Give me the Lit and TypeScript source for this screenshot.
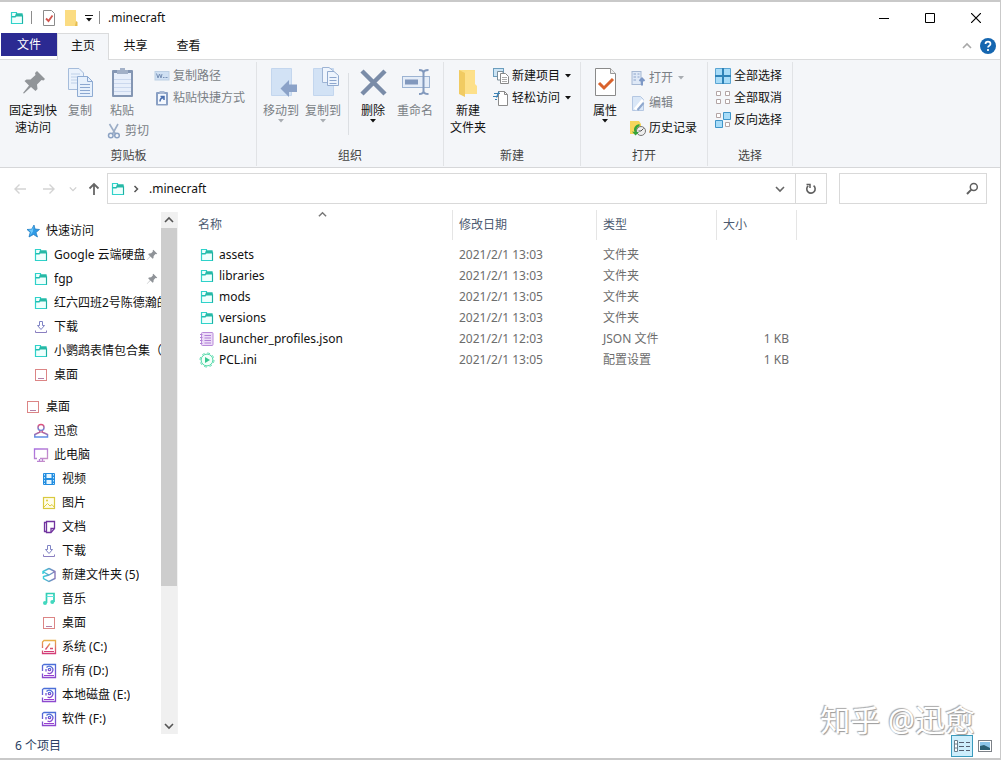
import { LitElement, html, svg, css, TemplateResult, SVGTemplateResult } from "lit";
import { customElement, state } from "lit/decorators.js";

type Art = SVGTemplateResult;

const icon = (size: number, art: Art, box = size): TemplateResult =>
  html`<svg width=${size} height=${size} viewBox="0 0 ${box} ${box}" fill="none" aria-hidden="true">${art}</svg>`;

const art: Record<string, Art> = {
  folder: svg`<path d="M2.5 13.5V2.5H7.5V5.5H13.5V13.5Z" stroke="#2fd2ca" stroke-width="1.200" fill="#effffd"/><path d="M7 3.5H13.5V6H7.5L6.5 7.5H2.5V6H6Z" fill="#22bfb2"/><path d="M7 3.500H13.500V6.500H7Z" fill="#27b9a6"/><path d="M13.5 6V13.5" stroke="#1fae9f"/>`,
  star: svg`<path d="M9 2L10 6L14.500 6.500L11 9.500L12.500 14L8.500 11.500L4 14L5.200 9.300L2 6.500L6.700 6.200Z" fill="#2f9be6" stroke="#1776bd" stroke-width=".7"/><path d="M8.500 3L7 6.500L3.500 6.800L6 9L5 12.500L8 8.500Z" fill="#6cc7fa"/>`,
  download: svg`<path d="M6.500 2.500H9.500V6.500H11.500L8 10.500L4.500 6.500H6.500Z" stroke="#7f83c4"/><path d="M2.500 11.500V13.500H13.500V11.500" stroke="#8a7fc0"/>`,
  desktop: svg`<rect x="2.500" y="2.500" width="11" height="11" stroke="#dc8585"/><path d="M5 11.500H11" stroke="#b57fa8"/>`,
  user: svg`<g stroke="url(#g-user)" stroke-width="1.500"><circle cx="8" cy="4.500" r="3"/><path d="M6.500 7.500L7 9L1.800 11.500V14H14.500V11.500L9 9L9.600 7.500"/></g>`,
  pc: svg`<g stroke="url(#g-pc)" stroke-width="1.300"><path d="M4 11.500H1.500V2H14.500V11.500H7"/><path d="M6.500 12V14M9.500 12V14M4 14.300H12"/></g>`,
  video: svg`<rect x="2" y="2" width="12" height="12" rx="1" fill="#238de0"/><path d="M5.500 3H10.500V7H5.500ZM5.500 9H10.500V13H5.500Z" fill="#e9f8ff"/><path d="M3.500 3V13M12.500 3V13" stroke="#bfe8ff" stroke-dasharray="1.500 1.500"/>`,
  picture: svg`<rect x="2.500" y="2.500" width="11" height="11" stroke="#d9c93f" stroke-width="1.200" fill="#fffdeb"/><path d="M3 12L6.500 8.500L9 11L11 9.500L13 12" stroke="#e0cf3f"/><circle cx="6" cy="5.500" r="1" fill="#ddca36"/>`,
  doc: svg`<path d="M5.500 12.500H3.500V3.500H5.500M5.500 2.500H13.500V9.500L10 13.500H5.500Z" stroke="#71349f" stroke-width="1.300"/><path d="M13.500 9.500H10V13" stroke="#71349f" stroke-width="1.300"/>`,
  cube: svg`<path d="M8 1.500L14 4.500V11.500L8 14.500L2.500 11.500V9M2 7V4.500L8 1.500M2.500 5L8 8L14 4.500M2.500 9.500L8 8" stroke="url(#g-cube)" stroke-width="1.400"/>`,
  music: svg`<path d="M5.500 12V2.500H13V11" stroke="#32cfb5" stroke-width="1.700"/><path d="M5.500 5.500H13" stroke="#5fe0e0"/><circle cx="4" cy="12" r="2" fill="#43d8bf"/><circle cx="11.300" cy="11" r="2" fill="#43d8bf"/>`,
  driveC: svg`<g stroke="url(#g-c)" stroke-width="1.300"><path d="M1.500 9V3L3 1.500H14.500V14.500H1.500V11.500"/><path d="M4.500 10.500L9 4.500M9 9.500H12"/></g><path d="M3 12.500H13" stroke="#d43c78"/>`,
  drive: svg`<g stroke="url(#g-d)" stroke-width="1.300"><path d="M1.500 8V2.500L3 1.500H14.500V14.500H1.500V10.500"/><path d="M5.500 4.500A3.600 3.600 0 1 1 6.500 10M5 6V8.500"/><circle cx="8.500" cy="6.500" r="1.200"/></g><path d="M3 12.500H13" stroke="#9b3fd0"/>`,
  json: svg`<rect x="2.500" y="1.500" width="11.500" height="13" rx="1" stroke="#b88ad9" fill="#ecdcf7"/><path d="M1 3.500H3.500M1 6.500H3.500M1 9.500H3.500M1 12.500H3.500M5.500 4.500H12M5.500 7H12M5.500 9.500H12M5.500 12H12" stroke="#b080d6"/>`,
  ini: svg`<circle cx="8" cy="8" r="7" stroke="#5bdcae" stroke-dasharray="2.800 2.700"/><circle cx="8" cy="8" r="5.900" fill="#f4fffa" stroke="#4fd7a6"/><path d="M6 5V11L11 8Z" fill="#35c78f"/>`,
  pin: svg`<path d="M9.500 2L14 6.500L12.800 7.200L11.900 6.900L9.900 9L9.700 11.500L8.700 12.300L6.200 9.800L2.500 13.500L2 14L2.400 13L5.800 9.300L3.600 7.200L4.500 6.300L7 6.100L9 4.100L8.700 3.100Z" fill="#8f9398"/>`,
  up: svg`<path d="M8 14V3M3.500 7.500L8 3L12.500 7.500" stroke="#666" stroke-width="1.800"/>`,
  back: svg`<path d="M14 8H3M7.500 3.500L3 8L7.500 12.500" stroke="#d3d3d3" stroke-width="1.400"/>`,
  forward: svg`<path d="M2 8H13M8.500 3.500L13 8L8.500 12.500" stroke="#d3d3d3" stroke-width="1.400"/>`,
  refresh: svg`<path d="M5.200 4.800A4.200 4.200 0 1 0 10.600 4.700" stroke="#5f5f5f" stroke-width="1.600"/><path d="M3.500 3.500H7V7" stroke="#5f5f5f" stroke-width="1.500"/>`,
  search: svg`<circle cx="9.800" cy="6" r="3.500" stroke="#606060" stroke-width="1.500"/><path d="M7.300 8.600L3 13" stroke="#606060" stroke-width="2"/>`,
  check: svg`<path d="M2.500 .5H10.500L13.500 3.500V15.500H2.500Z" fill="#fff" stroke="#8b8b8b"/><path d="M5 8.500L7.500 11L11.500 5.500" stroke="#d2564f" stroke-width="1.800"/>`,
  yellow: svg`<path d="M2 0H13V12H14V16H2Z" fill="#fbdc82"/><path d="M13 11L14.500 12V16H12Z" fill="#e6bd4e"/>`,
  copyPath: svg`<rect x="1" y="3.500" width="14" height="8.500" fill="#cfe0f3" stroke="#bccfe4"/><path d="M2.500 5.500L4 10L5.500 6L7 10L8 6M9 9.500H10.500M11.500 9.500H13.500" stroke="#7790b5"/>`,
  shortcut: svg`<rect x="2" y="2" width="12" height="13.500" rx="1" fill="#8aa0c4"/><rect x="4" y="4" width="8" height="10" fill="#f4f8fe"/><path d="M5.500 1H10.500V4H5.500Z" fill="#a9b9d3"/><path d="M6 11.500C6 9 7 8 9.500 7.500M6.500 6.500H10V10" stroke="#4b6fae" stroke-width="1.500"/>`,
  scissors: svg`<path d="M3.500 1L9.500 11M12 1L6.500 11" stroke="#9badc6" stroke-width="1.600"/><circle cx="4.800" cy="12.500" r="2.300" stroke="#8ba2c3" stroke-width="1.500"/><circle cx="11" cy="12.500" r="2.300" stroke="#8ba2c3" stroke-width="1.500"/>`,
  newItem: svg`<rect x=".5" y=".5" width="10" height="8" fill="#cbe4f5" stroke="#6b9dbd"/><path d="M4.500 3.500H10V12H4.500Z" fill="#fff" stroke="#7b8d99"/><path d="M7.500 5.500H12.500L15.500 8.500V15.500H7.500Z" fill="#fff" stroke="#888"/><path d="M9 9.500H14M9 11.500H14M9 13.500H14" stroke="#aaa"/>`,
  access: svg`<path d="M5.500 1.500H11.500L14.500 4.500V15.500H5.500Z" fill="#fff" stroke="#8b8b8b"/><path d="M11.500 1.500V4.500H14.500" stroke="#888"/><path d="M1 3.500H7M0 6.500H5M2 9.500H4M6 1.500L3.500 7.500" stroke="#3c82b4" stroke-width="1.200"/>`,
  open: svg`<rect x="2" y="1.500" width="9" height="13" fill="#dfe9f7" stroke="#a6b8d3"/><path d="M3.500 4H6M3.500 7H6M3.500 10H6M7.500 4H9.500M7.500 7H9.500" stroke="#8ca4ca"/><path d="M12 15.500V9M9.500 11L12 8.500L14.500 11" stroke="#7d98c6" stroke-width="2"/>`,
  edit: svg`<path d="M2.500 1.500H10.500L13.500 4.500V15.500H2.500Z" fill="#dae7f7" stroke="#b4c7e2"/><path d="M13 5L5 14.500" stroke="#fff" stroke-width="3"/><path d="M13.500 8L7.500 15" stroke="#8ea7cd" stroke-width="2"/>`,
  history: svg`<path d="M0 1H9L11 4V14H0Z" fill="#f6d65c"/><circle cx="11" cy="11" r="4.500" fill="#eee" stroke="#777"/><path d="M11 11L13.500 8.500M11 11H8.500" stroke="#555"/><path d="M9.500 4C5 5 3 8 4.500 12L2 11.500L5.500 15.500L9 12H6.500C6 9 7 7 9.500 6Z" fill="#36a43b"/>`,
  selectAll: svg`<path d="M.5 .5H7.500V7.500H.5ZM8.500 .5H15.500V7.500H8.500ZM.5 8.500H7.500V15.500H.5ZM8.500 8.500H15.500V15.500H8.500Z" fill="#a8dcf8" stroke="#5aa5d3"/><path d="M8 0V16M0 8H16" stroke="#2f83b8" stroke-width="2"/>`,
  selectNone: svg`<path d="M1.500 1.500H5.500V5.500H1.500ZM10.500 1.500H14.500V5.500H10.500ZM1.500 9.500H5.500V13.500H1.500ZM10.500 9.500H14.500V13.500H10.500Z" fill="#fff" stroke="#b3a5a5"/>`,
  invert: svg`<path d="M1.500 1.500H5.500V5.500H1.500ZM10.500 10.500H14.500V14.500H10.500Z" fill="#fff" stroke="#b3a5a5"/><path d="M8.500 .5H15.500V7.500H8.500ZM.5 8.500H7.500V15.500H.5Z" fill="#a8dcf8" stroke="#3f95c9"/>`,
  bigPin: svg`<path d="M20 4L28 12L26.500 13.500L24.500 13L20 17.500L20.500 22L18.500 24L14 20L7 26.500L6 26L12 18.500L7.500 14L9.500 12.500L13.500 12.500L18.500 8L18 6Z" fill="#919599"/>`,
  bigCopy: svg`<path d="M4.500 1.500H15L19.500 6V22.500H4.500Z" fill="#eaf2fc" stroke="#a5bcdb"/><path d="M7 7H16M7 10H16M7 13H16M7 16H16" stroke="#bed0e8"/><path d="M13.500 9.500H23.500L28.500 14.500V29.500H13.500Z" fill="#e6f0fc" stroke="#8eabd2"/><path d="M23.500 9.500V14.500H28.500M16 17.500H26M16 20.500H26M16 23.500H26M16 26.500H26" stroke="#8ba7d0"/>`,
  bigPaste: svg`<rect x="6" y="3" width="21" height="27" rx="1" fill="#8496b3"/><rect x="8" y="6" width="17" height="22" fill="#e8effb"/><path d="M8 12.500H25M8 16.500H25M8 20.500H25M8 24.500H25" stroke="#cbd8ee"/><path d="M11 3H14V1H19V3H22V7H11Z" fill="#a3b1c8"/>`,
  moveTo: svg`<path d="M6.500 1.500H26.500V28.500H6.500Z" fill="#d2e2f5" stroke="#c3d6ee"/><path d="M32 17.500H24V13L15.500 21.500L24 30V25H32Z" fill="#8ba2c8"/>`,
  copyTo: svg`<path d="M6.500 1.500H26.500V28.500H6.500Z" fill="#d2e2f5" stroke="#c3d6ee"/><path d="M15.500 .5H22L26.500 4V15.500H15.500Z" fill="#eff5fd" stroke="#9eb4d4"/><path d="M20.500 4.500H27L31.500 8.500V18.500H20.500Z" fill="#edf4fd" stroke="#92abcf"/><path d="M22.500 10.500H29.500M22.500 13.500H29.500M22.500 16.500H29.500" stroke="#8da6cd"/>`,
  remove: svg`<path d="M5 4L28 27M28 4L5 27" stroke="#7a8ca8" stroke-width="4.500"/>`,
  rename: svg`<rect x="3.500" y="9.500" width="27" height="11" fill="#e5edf8" stroke="#9cb3d2"/><rect x="6" y="12.500" width="13" height="5" fill="#8198bd"/><path d="M20 3C23 3 24.500 4 24.500 6V24C24.500 26 23 27 20 27M29.500 3C26 3 24.500 4 24.500 6M24.500 24C24.500 26 26 27 29.500 27" stroke="#8299bd" stroke-width="2"/>`,
  newFolder: svg`<path d="M7 3H23V26H7Z" fill="#fbdf86"/><path d="M7 3L13 6V30L7 27Z" fill="#f1cb62"/><path d="M13 6L16 4H23V17L25 19V27H13Z" fill="#fde08a"/>`,
  properties: svg`<path d="M6.500 1.500H21.500L26.500 6.500V28.500H6.500Z" fill="#fff" stroke="#8a8a8a"/><path d="M21.500 1.500V6.500H26.500" fill="#eee" stroke="#999"/><path d="M10 16L15 21L24 12" stroke="#d9622c" stroke-width="3"/>`,
};

interface Cmd { label: string; icon: string; off?: boolean; menu?: boolean; lines?: string[] }

const places = [
  { label: "Google 云端硬盘", icon: "folder", level: 1, pinned: true },
  { label: "fgp", icon: "folder", level: 1, pinned: true },
  { label: "红六四班2号陈德瀚的", icon: "folder", level: 1 },
  { label: "下载", icon: "download", level: 1 },
  { label: "小鹦鹉表情包合集（", icon: "folder", level: 1 },
  { label: "桌面", icon: "desktop", level: 1 },
];
const tree = [
  { label: "桌面", icon: "desktop", level: 0 },
  { label: "迅愈", icon: "user", level: 1 },
  { label: "此电脑", icon: "pc", level: 1 },
  { label: "视频", icon: "video", level: 2 },
  { label: "图片", icon: "picture", level: 2 },
  { label: "文档", icon: "doc", level: 2 },
  { label: "下载", icon: "download", level: 2 },
  { label: "新建文件夹 (5)", icon: "cube", level: 2 },
  { label: "音乐", icon: "music", level: 2 },
  { label: "桌面", icon: "desktop", level: 2 },
  { label: "系统 (C:)", icon: "driveC", level: 2 },
  { label: "所有 (D:)", icon: "drive", level: 2 },
  { label: "本地磁盘 (E:)", icon: "drive", level: 2 },
  { label: "软件 (F:)", icon: "drive", level: 2 },
];
const files = [
  ["folder", "assets", "2021/2/1 13:03", "文件夹", ""],
  ["folder", "libraries", "2021/2/1 13:03", "文件夹", ""],
  ["folder", "mods", "2021/2/1 13:05", "文件夹", ""],
  ["folder", "versions", "2021/2/1 13:03", "文件夹", ""],
  ["json", "launcher_profiles.json", "2021/2/1 12:03", "JSON 文件", "1 KB"],
  ["ini", "PCL.ini", "2021/2/1 13:05", "配置设置", "1 KB"],
];

@customElement("app-root")
export class AppRoot extends LitElement {
  @state() private query = "";

  static styles = css`
    :host { display: block; font: 12px/16px "Noto Sans", "Noto Sans CJK SC", sans-serif; color: #111; }
    * { box-sizing: border-box; }
    svg { display: block; flex: none; }
    button { font: inherit; color: inherit; background: none; border: 0; padding: 0; margin: 0; }
    a { color: inherit; text-decoration: none; }
    .defs { position: absolute; }
    .window { position: relative; display: flex; flex-direction: column; height: 100vh; background: #fff;
      border: solid #c9c9c9; border-width: 2px 1px 2px 0; overflow: hidden; }

    .title { display: flex; align-items: center; height: 31px; padding-left: 9px; flex: none; }
    .title .bar { width: 1px; height: 13px; background: #8c8c8c; }
    .quick { display: flex; align-items: center; gap: 6px; }
    .quick .bar { margin-right: 3px; }
    .title h1 { font-size: 12px; font-weight: 400; margin: 0 0 0 5px; flex: 1; }
    .caption { width: 46px; height: 31px; display: grid; place-items: center; }
    .caption:last-child { margin-right: 1px; }

    .tabs { display: flex; align-items: stretch; height: 27px; border-bottom: 1px solid #dadbdc; padding-left: 1px; flex: none; }
    .tab { width: 53px; height: 25px; }
    .tab.file { width: 56px; height: 23px; background: #2b2a92; color: #fff; }
    .tab.on { width: 52px; height: 27px; padding-bottom: 2px; background: #f4f6f9; border: 1px solid #dadbdc; border-bottom: 0; }
    .help { margin-left: auto; display: flex; align-items: center; gap: 8px; padding-right: 4px; }

    .ribbon { display: flex; height: 108px; background: #f4f6f9; border-bottom: 1px solid #d6d7d9; padding-left: 1px; flex: none; }
    .group { display: flex; flex-direction: column; border-right: 1px solid #e1e3e6; margin: 2px 0 1px; }
    .cmds { display: flex; flex: 1; padding: 5px 3px 0; }
    .group h2 { margin: 0; font-size: 12px; font-weight: 400; line-height: 20px; text-align: center; color: #444; }
    .clip { width: 256px; } .org { width: 187px; } .new { width: 137px; } .open { width: 127px; } .sel { width: 85px; }
    .big { display: flex; flex-direction: column; align-items: center; width: 42px; line-height: 17px; white-space: nowrap; }
    .big svg { margin-bottom: 3px; }
    .big.wide { width: 58px; }
    .big.slim { width: 36px; }
    .big .arrow, .small .arrow { margin: 0; }
    .off { color: #7a7f85; }
    .rows { display: flex; flex-direction: column; align-items: flex-start; margin-top: -2px; }
    .small { display: flex; align-items: center; gap: 3px; height: 22px; white-space: nowrap; }
    .tall .small { height: 25px; }
    .small .arrow { margin-left: 1px; }
    .paste { display: flex; flex-direction: column; align-items: flex-start; width: 56px; padding-left: 8px; }
    .paste .big { width: 32px; height: 53px; }
    .rule { width: 1px; height: 62px; margin: 6px 3px 0 4px; background: #dcdfe3; }
    .open .cmds { padding-left: 8px; }
    .open .big { width: 32px; margin-right: 9px; }
    .new .rows { margin-left: 4px; }
    .sel .cmds { padding-left: 7px; }

    .nav { display: flex; align-items: center; height: 41px; padding: 0 13px 0 12px; flex: none; }
    .arrows { display: flex; align-items: center; width: 95px; gap: 13px; }
    .arrows .more { margin: 0 -4px 0 -1px; }
    .address { display: flex; align-items: stretch; flex: 1; height: 31px; border: 1px solid #d9d9d9; }
    .crumbs { display: flex; align-items: center; flex: 1; gap: 6px; padding-left: 2px; }
    .crumbs a { margin-left: 3px; }
    .address button { width: 30px; display: grid; place-items: center; }
    .address .reload { border-left: 1px solid #d9d9d9; width: 31px; }
    .search { display: flex; align-items: center; width: 148px; height: 31px; margin-left: 12px; padding: 0 6px; border: 1px solid #d9d9d9; }
    .search input { flex: 1; min-width: 0; border: 0; outline: 0; font: inherit; background: none; }

    .body { display: flex; flex: 1; min-height: 0; padding-top: 3px; }
    .side { display: flex; width: 178px; border-right: 1px solid #f2f2f2; flex: none; }
    .tree { flex: 1; min-width: 0; overflow: hidden; padding-top: 7px; }
    .tree ul { list-style: none; margin: 0 0 8px; padding: 0; }
    .node { display: flex; align-items: center; gap: 5px; height: 24px; padding-left: 25px; white-space: nowrap; overflow: hidden; }
    .node.l1 { padding-left: 33px; }
    .node.l2 { padding-left: 41px; }
    .node span { overflow: hidden; }
    .node.pinned span { width: 91px; }
    .node.pinned svg:last-child { margin-left: -5px; }
    .scroll { display: flex; flex-direction: column; width: 16px; background: #f0f0f0; }
    .scroll button { height: 16px; display: grid; place-items: center; }
    .track { flex: 1; }
    .thumb { height: 73%; background: #cdcdcd; }

    .list { flex: 1; padding-left: 13px; margin-top: -2px; }
    table { border-collapse: separate; border-spacing: 0; table-layout: fixed; width: 606px; }
    th { position: relative; height: 30px; font-weight: 400; text-align: left; color: #4c5a70; padding: 0 6px; border-right: 1px solid #e5e5e5; }
    td { height: 21px; padding: 0 6px; color: #6d6d6d; white-space: nowrap; }
    thead::after { content: ""; display: block; height: 4px; }
    .c1 { width: 262px; } .c2 { width: 144px; } .c3 { width: 120px; } .c4 { width: 80px; }
    th.sorted { padding-left: 7px; }
    .sorted svg { position: absolute; top: 0; left: 50%; margin-left: -4px; }
    td.name { padding-left: 8px; color: #111; }
    .name div { display: flex; align-items: center; gap: 4px; }
    td.size { text-align: right; padding-right: 8px; }

    .status { display: flex; align-items: center; height: 24px; padding-left: 15px; color: #2b3f63; flex: none; }
    .views { display: flex; margin-left: auto; align-items: center; padding-right: 6px; gap: 2px; }
    .views button { display: grid; place-items: center; width: 19px; height: 22px; }
    .views .active { width: 22px; background: #cdeefc; border: 1px solid #3a9bbd; }
    .mark { position: absolute; right: 25px; bottom: 21px; font-size: 30px; line-height: 34px; color: #fff;
      text-shadow: -1px -1px 1px #aaa, 1px 1px 1px #999; pointer-events: none; }
  `;

  private arrow(off = false) {
    return html`<svg class="arrow" width="8" height="4" viewBox="0 0 8 4"><path d="M1 0H7L4 3.500Z" fill=${off ? "#a9adb2" : "#111"} /></svg>`;
  }

  private chevron(dir: "up" | "down", color: string, size = 10) {
    return html`<svg width=${size} height=${size} viewBox="0 0 10 10" fill="none"><path d=${dir === "up" ? "M1 7L5 3L9 7" : "M1 3L5 7L9 3"} stroke=${color} stroke-width="1.600"/></svg>`;
  }

  private big(c: Cmd, size = "") {
    return html`<button class="big ${size} ${c.off ? "off" : ""}">
      ${icon(32, art[c.icon])}${(c.lines ?? [c.label]).map((l) => html`<span>${l}</span>`)}${c.menu ? this.arrow(c.off) : ""}
    </button>`;
  }

  private small(c: Cmd) {
    return html`<button class="small ${c.off ? "off" : ""}">${icon(16, art[c.icon])}<span>${c.label}</span>${c.menu ? this.arrow(c.off) : ""}</button>`;
  }

  private node(n: { label: string; icon: string; level: number; pinned?: boolean }) {
    return html`<li><a href="#" class="node l${n.level} ${n.pinned ? "pinned" : ""}">${icon(16, art[n.icon])}<span>${n.label}</span>${n.pinned ? icon(14, art.pin, 16) : ""}</a></li>`;
  }

  render() {
    return html`
      <svg class="defs" width="0" height="0" aria-hidden="true">
        <linearGradient id="g-user" x1="0" y1="0" x2="0" y2="1"><stop stop-color="#e0507a"/><stop offset="1" stop-color="#5b8fe8"/></linearGradient>
        <linearGradient id="g-pc" x1="0" y1="0" x2="1" y2="1"><stop stop-color="#a86fe0"/><stop offset="1" stop-color="#c790c8"/></linearGradient>
        <linearGradient id="g-cube" x1="0" y1="0" x2="1" y2="0"><stop stop-color="#35d0dc"/><stop offset="1" stop-color="#8a78b8"/></linearGradient>
        <linearGradient id="g-c" x1="0" y1="0" x2="0" y2="1"><stop stop-color="#e8b04a"/><stop offset="1" stop-color="#d43c78"/></linearGradient>
        <linearGradient id="g-d" x1="0" y1="0" x2="0" y2="1"><stop stop-color="#4b6fd8"/><stop offset="1" stop-color="#8d48cf"/></linearGradient>
      </svg>
      <div class="window">
        <header class="title">
          <div class="quick">
            ${icon(16, art.folder)}<i class="bar"></i>
            ${icon(16, art.check)}${icon(16, art.yellow)}
            <button aria-label="自定义快速访问工具栏"><svg width="8" height="8" viewBox="0 0 8 8"><path d="M0 1.500H8" stroke="#111"/><path d="M1 4H7L4 7.500Z" fill="#111"/></svg></button>
            <i class="bar"></i>
          </div>
          <h1>.minecraft</h1>
          <button class="caption" aria-label="最小化"><svg width="10" height="10"><path d="M0 5.500H10" stroke="#000"/></svg></button>
          <button class="caption" aria-label="最大化"><svg width="10" height="10" fill="none"><path d="M.5 .5H9.500V9.500H.5Z" stroke="#000"/></svg></button>
          <button class="caption" aria-label="关闭"><svg width="10" height="10"><path d="M0 0L10 10M10 0L0 10" stroke="#000" stroke-width="1.200"/></svg></button>
        </header>

        <nav class="tabs">
          <button class="tab file">文件</button>
          <button class="tab on">主页</button>
          <button class="tab">共享</button>
          <button class="tab">查看</button>
          <div class="help">
            ${this.chevron("up", "#a8a8a8")}
            <button aria-label="帮助"><svg width="16" height="16" viewBox="0 0 16 16" fill="none"><circle cx="8" cy="8" r="8" fill="#1566b0"/><path d="M5.500 6C5.500 2.800 10.500 2.800 10.500 6C10.500 7.800 8 7.600 8 9.500M8 11V13" stroke="#fff" stroke-width="1.700"/></svg></button>
          </div>
        </nav>

        <section class="ribbon">
          <div class="group clip">
            <div class="cmds">
              ${this.big({ label: "固定到快速访问", lines: ["固定到快", "速访问"], icon: "bigPin" }, "wide")}
              ${this.big({ label: "复制", icon: "bigCopy", off: true }, "slim")}
              <div class="paste">
                ${this.big({ label: "粘贴", icon: "bigPaste", off: true })}
                ${this.small({ label: "剪切", icon: "scissors", off: true })}
              </div>
              <div class="rows">
                ${this.small({ label: "复制路径", icon: "copyPath", off: true })}
                ${this.small({ label: "粘贴快捷方式", icon: "shortcut", off: true })}
              </div>
            </div>
            <h2>剪贴板</h2>
          </div>
          <div class="group org">
            <div class="cmds">
              ${this.big({ label: "移动到", icon: "moveTo", off: true, menu: true })}
              ${this.big({ label: "复制到", icon: "copyTo", off: true, menu: true })}
              <i class="rule"></i>
              ${this.big({ label: "删除", icon: "remove", menu: true })}
              ${this.big({ label: "重命名", icon: "rename", off: true })}
            </div>
            <h2>组织</h2>
          </div>
          <div class="group new">
            <div class="cmds">
              ${this.big({ label: "新建文件夹", lines: ["新建", "文件夹"], icon: "newFolder" })}
              <div class="rows">
                ${this.small({ label: "新建项目", icon: "newItem", menu: true })}
                ${this.small({ label: "轻松访问", icon: "access", menu: true })}
              </div>
            </div>
            <h2>新建</h2>
          </div>
          <div class="group open">
            <div class="cmds">
              ${this.big({ label: "属性", icon: "properties", menu: true })}
              <div class="rows tall">
                ${this.small({ label: "打开", icon: "open", off: true, menu: true })}
                ${this.small({ label: "编辑", icon: "edit", off: true })}
                ${this.small({ label: "历史记录", icon: "history" })}
              </div>
            </div>
            <h2>打开</h2>
          </div>
          <div class="group sel">
            <div class="cmds">
              <div class="rows">
                ${this.small({ label: "全部选择", icon: "selectAll" })}
                ${this.small({ label: "全部取消", icon: "selectNone" })}
                ${this.small({ label: "反向选择", icon: "invert" })}
              </div>
            </div>
            <h2>选择</h2>
          </div>
        </section>

        <div class="nav">
          <div class="arrows">
            <button aria-label="后退">${icon(16, art.back)}</button>
            <button aria-label="前进">${icon(16, art.forward)}</button>
            <button class="more" aria-label="最近位置">${this.chevron("down", "#d0d0d0", 8)}</button>
            <button aria-label="上移">${icon(16, art.up)}</button>
          </div>
          <div class="address">
            <div class="crumbs">
              ${icon(16, art.folder)}
              <svg width="8" height="10" viewBox="0 0 8 10" fill="none"><path d="M2.500 2L5.500 5L2.500 8" stroke="#555" stroke-width="1.500"/></svg>
              <a href="#">.minecraft</a>
            </div>
            <button aria-label="历史">${this.chevron("down", "#666")}</button>
            <button class="reload" aria-label="刷新">${icon(16, art.refresh)}</button>
          </div>
          <label class="search">
            <input type="text" aria-label="搜索" .value=${this.query} @input=${(e: Event) => (this.query = (e.target as HTMLInputElement).value)} />
            ${icon(16, art.search)}
          </label>
        </div>

        <main class="body">
          <aside class="side">
            <div class="tree">
              <ul>${this.node({ label: "快速访问", icon: "star", level: 0 })}${places.map((p) => this.node(p))}</ul>
              <ul>${tree.map((p) => this.node(p))}</ul>
            </div>
            <div class="scroll">
              <button aria-label="向上滚动">${this.chevron("up", "#555")}</button>
              <div class="track"><div class="thumb"></div></div>
              <button aria-label="向下滚动">${this.chevron("down", "#555")}</button>
            </div>
          </aside>
          <section class="list">
            <table>
              <colgroup><col class="c1" /><col class="c2" /><col class="c3" /><col class="c4" /></colgroup>
              <thead>
                <tr><th class="sorted">名称${this.chevron("up", "#777", 9)}</th><th>修改日期</th><th>类型</th><th>大小</th></tr>
              </thead>
              <tbody>
                ${files.map(([i, name, date, type, size]) => html`<tr>
                  <td class="name"><div>${icon(16, art[i])}<span>${name}</span></div></td>
                  <td>${date}</td><td>${type}</td><td class="size">${size}</td>
                </tr>`)}
              </tbody>
            </table>
          </section>
        </main>

        <footer class="status">
          <span>6 个项目</span>
          <div class="views">
            <button class="active" aria-label="详细信息"><svg width="18" height="14" viewBox="0 0 18 14" fill="none"><path d="M1.500 1.500H4.500V12.500H1.500ZM1.500 5H4.500M1.500 9H4.500" fill="#fff" stroke="#6a7f8c"/><path d="M6 3.500H11M6 7.500H11M6 11.500H11M13 3.500H17M13 7.500H17M13 11.500H17" stroke="#555f70"/></svg></button>
            <button aria-label="大图标"><svg width="14" height="12" viewBox="0 0 14 12" fill="none"><rect x=".5" y=".5" width="13" height="11" fill="#fff" stroke="#7c8187"/><rect x="2" y="2" width="10" height="8" fill="#8cc4e8"/><path d="M2 6L6 5L12 8V10H2Z" fill="#2b5f74"/></svg></button>
          </div>
        </footer>
        <div class="mark">知乎 @迅愈</div>
      </div>
    `;
  }
}
